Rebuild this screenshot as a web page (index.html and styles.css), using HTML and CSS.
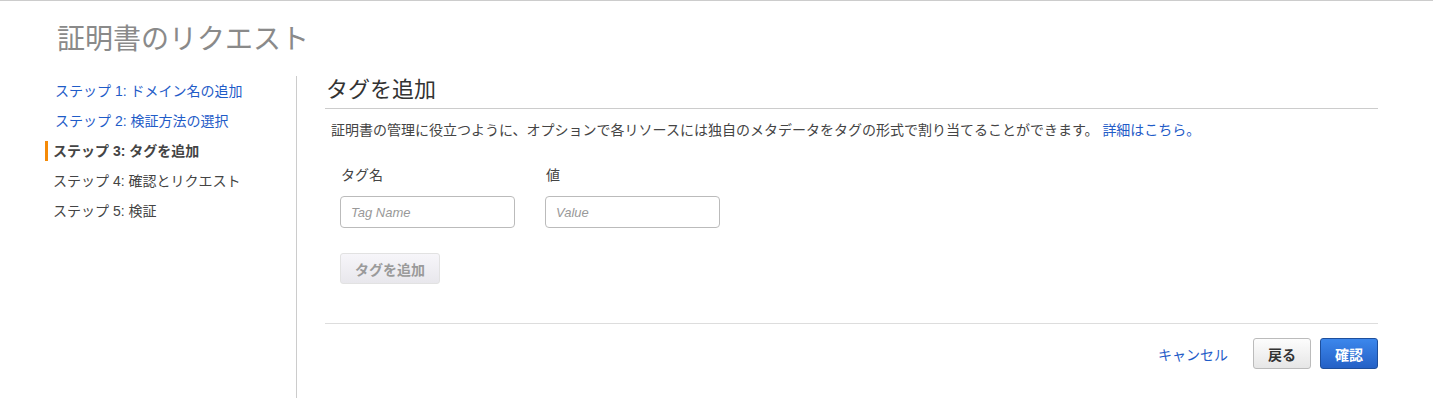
FILE: index.html
```html
<!DOCTYPE html>
<html lang="ja">
<head>
  <meta charset="UTF-8">
  <title>証明書のリクエスト</title>
  <link rel="stylesheet" href="styles.css">
</head>
<body>
  <div class="page">
    <h1 class="page-title">証明書のリクエスト</h1>

    <div class="wizard">
      <ul class="steps">
        <li class="step done"><a href="#">ステップ 1: ドメイン名の追加</a></li>
        <li class="step done"><a href="#">ステップ 2: 検証方法の選択</a></li>
        <li class="step active">ステップ 3: タグを追加</li>
        <li class="step">ステップ 4: 確認とリクエスト</li>
        <li class="step">ステップ 5: 検証</li>
      </ul>

      <div class="content">
        <h2 class="section-title">タグを追加</h2>
        <p class="intro">証明書の管理に役立つように、オプションで各リソースには独自のメタデータをタグの形式で割り当てることができます。 <a href="#">詳細はこちら。</a></p>

        <div class="tag-grid">
          <label class="field-label" for="tagName">タグ名</label>
          <label class="field-label" for="tagValue">値</label>
          <input type="text" id="tagName" class="text-input" placeholder="Tag Name">
          <input type="text" id="tagValue" class="text-input" placeholder="Value">
        </div>

        <button class="btn btn-disabled" disabled>タグを追加</button>

        <div class="footer">
          <a href="#" class="cancel">キャンセル</a>
          <button class="btn btn-default">戻る</button>
          <button class="btn btn-primary">確認</button>
        </div>
      </div>
    </div>
  </div>
</body>
</html>
```

FILE: styles.css
```css
body {
  margin: 0;
  font-family: "Liberation Sans", "Noto Sans CJK JP", sans-serif;
  color: #444;
  background: #fff;
}

a {
  color: #1f5cc8;
  text-decoration: none;
}

.page {
  border-top: 1px solid #ccc;
  height: 397px;
  overflow: hidden;
}

.page-title {
  margin: 0;
  padding: 19px 0 0 57px;
  height: 56px;
  font-size: 28px;
  font-weight: normal;
  line-height: 40px;
  color: #8a8a8a;
}

.wizard {
  display: flex;
  height: 322px;
}

/* Left step list */
.steps {
  list-style: none;
  margin: 0;
  padding: 0 0 0 45px;
  width: 251px;
  border-right: 1px solid #ccc;
}

.step {
  height: 30px;
  line-height: 30px;
  font-size: 14px;
  padding-left: 8px;
}

.step.done {
  padding-left: 10px;
}

.step.active {
  font-weight: bold;
  color: #444;
  padding-left: 5px;
  border-left: 3px solid #f58a07;
  line-height: 20px;
  height: 20px;
  margin: 5px 0;
}

/* Main area */
.content {
  flex: 1;
  margin: 0 55px 0 28px;
}

.section-title {
  margin: 0;
  height: 32px;
  line-height: 28px;
  font-size: 22px;
  font-weight: normal;
  color: #333;
  border-bottom: 1px solid #ccc;
  padding-left: 1px;
}

.intro {
  margin: 0;
  padding: 10px 0 0 6px;
  font-size: 14px;
  line-height: 22px;
  color: #444;
}

.tag-grid {
  display: grid;
  grid-template-columns: 175px 175px;
  column-gap: 30px;
  row-gap: 11px;
  margin: 24px 0 0 15px;
}

.field-label {
  font-size: 14px;
  line-height: 20px;
  padding-left: 1px;
  color: #444;
}

.text-input {
  box-sizing: border-box;
  height: 32px;
  width: 175px;
  border: 1px solid #bbb;
  border-radius: 4px;
  padding: 0 10px;
  font-family: "Liberation Sans", "Noto Sans CJK JP", sans-serif;
  font-size: 13px;
  outline: none;
}

.text-input::placeholder {
  color: #999;
  font-style: italic;
}

.btn {
  box-sizing: border-box;
  height: 31px;
  width: 58px;
  border-radius: 3px;
  font-family: "Liberation Sans", "Noto Sans CJK JP", sans-serif;
  font-size: 14px;
  font-weight: bold;
  cursor: pointer;
}

.btn-disabled {
  display: block;
  width: 100px;
  margin: 25px 0 0 15px;
  border: 1px solid #e2e2e2;
  background: linear-gradient(#f7f6fa, #e8e7ec);
  color: #9a9a9a;
  cursor: default;
}

.footer {
  display: flex;
  justify-content: flex-end;
  align-items: center;
  gap: 9px;
  margin-top: 39px;
  padding-top: 14px;
  border-top: 1px solid #ddd;
}

.cancel {
  font-size: 14px;
  margin-right: 16px;
}

.btn-default {
  border: 1px solid #bbb;
  background: linear-gradient(#fdfdfd, #e6e6e6);
  color: #333;
}

.btn-primary {
  border: 1px solid #1e4f9c;
  background: linear-gradient(#3c87ec, #2461c6);
  color: #fff;
}
```
